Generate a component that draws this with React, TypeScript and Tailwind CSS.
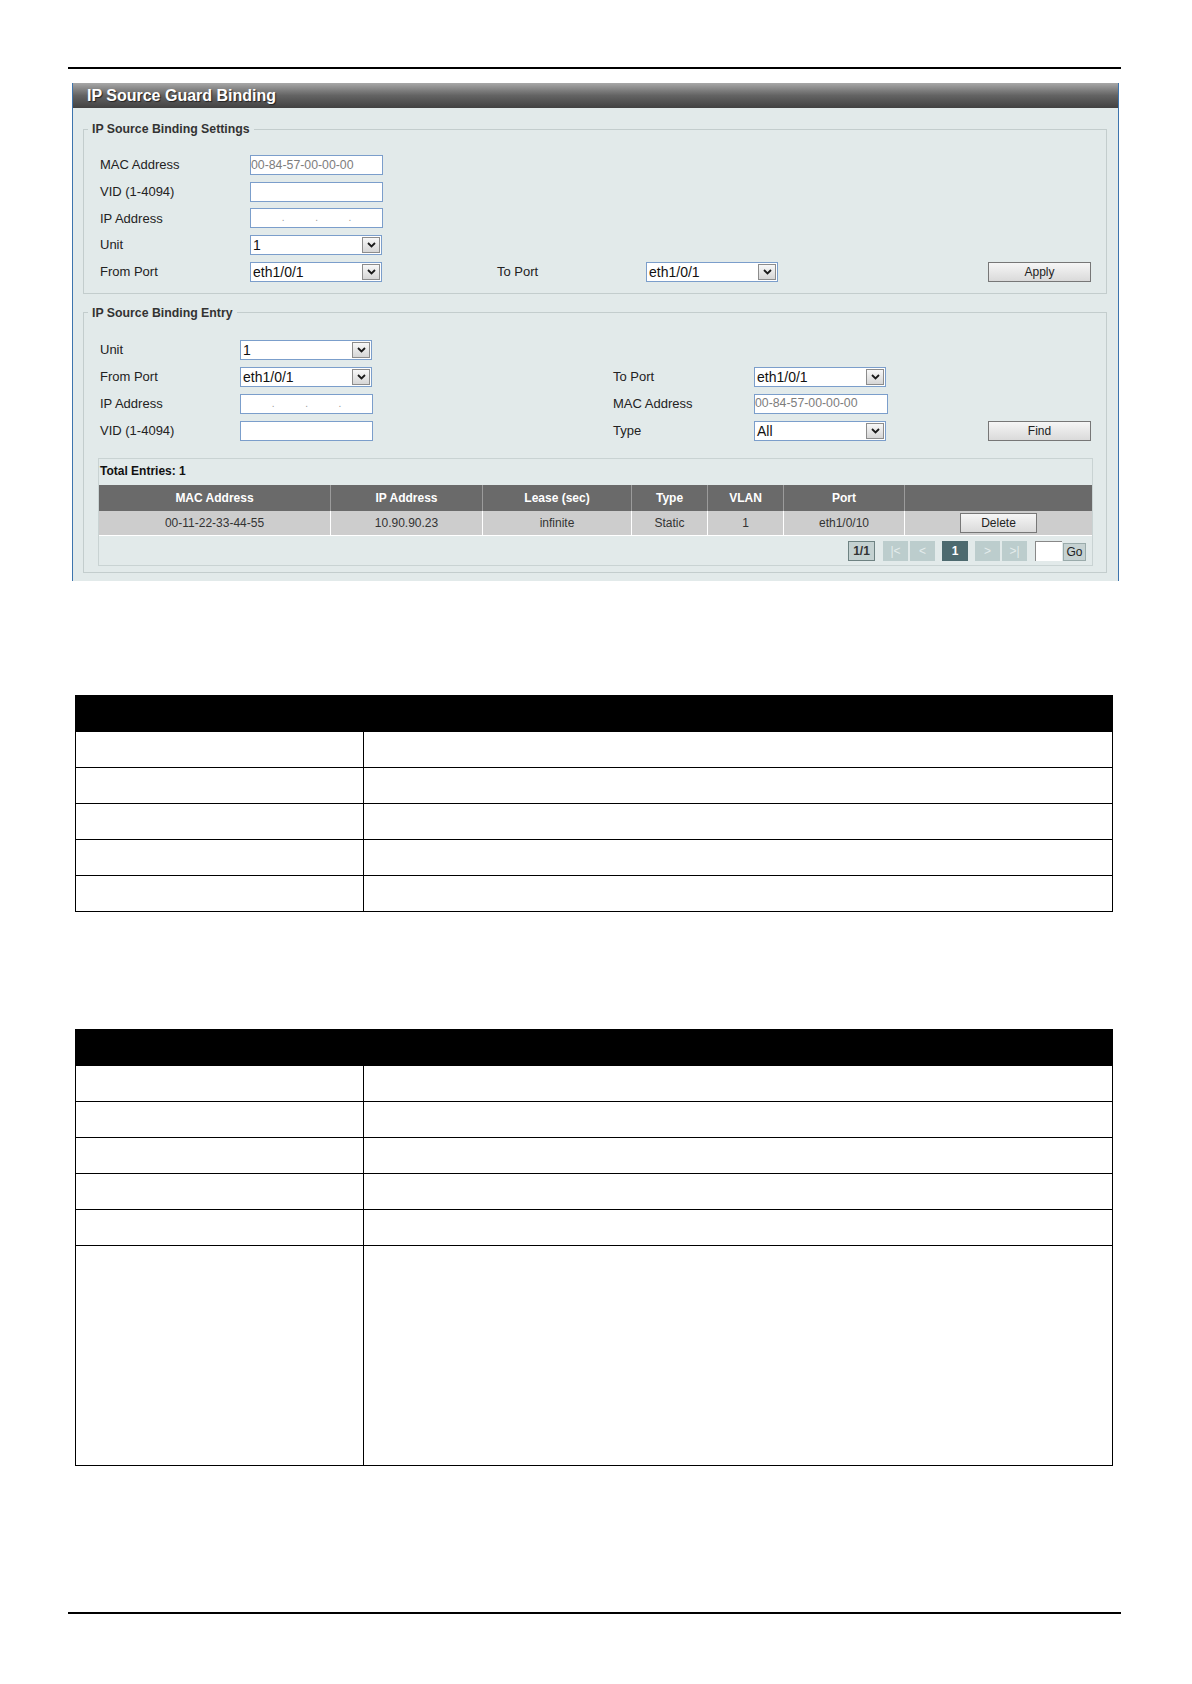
import React from "react";

// Small dropdown arrow button used by every select box
const ArrowBox = () => (
  <span className="flex h-[16px] w-[18px] shrink-0 items-center justify-center border border-[#8c8c8c] bg-linear-to-b from-[#f8f8f8] to-[#d6d6d6]">
    <svg width="9" height="6" viewBox="0 0 9 6">
      <path d="M1 1l3.5 3.5L8 1" fill="none" stroke="#1a1a1a" strokeWidth="1.8" />
    </svg>
  </span>
);

function Select({ value, width }: { value: string; width: string }) {
  return (
    <div
      className={`flex h-[20px] shrink-0 items-center justify-between border border-[#7b9ecb] bg-white pl-[2px] pr-[1px] text-[14px] leading-none text-[#111] ${width}`}
    >
      <span>{value}</span>
      <ArrowBox />
    </div>
  );
}

function TextInput({ value = "", width }: { value?: string; width: string }) {
  return (
    <div
      className={`flex h-[20px] shrink-0 items-center border border-[#7b9ecb] bg-white text-[12.3px] leading-none text-[#7d7d7d] ${width}`}
    >
      {value}
    </div>
  );
}

// IPv4 field: four empty octets separated by dots
function IpInput({ width }: { width: string }) {
  return (
    <div
      className={`flex h-[20px] shrink-0 items-center border border-[#7b9ecb] bg-white text-[10px] leading-none text-[#9a9a9a] ${width}`}
    >
      <span className="flex-1" />
      <span>.</span>
      <span className="flex-1" />
      <span>.</span>
      <span className="flex-1" />
      <span>.</span>
      <span className="flex-1" />
    </div>
  );
}

function Button({ label, width }: { label: string; width: string }) {
  return (
    <div
      className={`flex h-[20px] shrink-0 items-center justify-center border border-[#777] bg-linear-to-b from-[#f6f6f6] to-[#dadada] text-[12px] text-[#222] ${width}`}
    >
      {label}
    </div>
  );
}

function Label({ text, width }: { text: string; width: string }) {
  return <span className={`shrink-0 text-[13px] text-[#222] ${width}`}>{text}</span>;
}

function Legend({ text }: { text: string }) {
  return (
    <legend className="ml-[4px] px-[4px] text-[12.3px] font-bold leading-[14px] text-[#333]">
      {text}
    </legend>
  );
}

const columns = ["MAC Address", "IP Address", "Lease (sec)", "Type", "VLAN", "Port", ""];
const entry = ["00-11-22-33-44-55", "10.90.90.23", "infinite", "Static", "1", "eth1/0/10"];

function PagerBox({
  children,
  className,
}: {
  children?: React.ReactNode;
  className: string;
}) {
  return (
    <div className={`flex h-[20px] shrink-0 items-center justify-center text-[12px] ${className}`}>
      {children}
    </div>
  );
}

function BlankTable({ rows }: { rows: string[] }) {
  return (
    <div className="ml-[75px] w-[1038px] border-x border-black">
      <div className="h-[37px] bg-black" />
      {rows.map((h, i) => (
        <div key={i} className={`flex border-b border-black ${h}`}>
          <div className="w-[288px] border-r border-black" />
          <div className="flex-1" />
        </div>
      ))}
    </div>
  );
}

export default function App() {
  return (
    <div className="relative h-[1684px] w-[1192px] overflow-hidden bg-white pt-[67px] font-['Liberation_Sans',Arial,sans-serif]">
      <div className="ml-[68px] h-[2px] w-[1053px] bg-black" />

      {/* Settings panel */}
      <div className="ml-[72px] mt-[14px] h-[498px] w-[1047px] border-x border-[#3d74ad] bg-[#e2eaea]">
        <div className="flex h-[25px] items-center bg-linear-to-b from-[#a8a8a8] via-[#636363] to-[#424242] pl-[14px] text-[16px] font-bold text-white [text-shadow:1px_1px_1px_#222]">
          IP Source Guard Binding
        </div>

        <fieldset className="ml-[10px] mr-[11px] mt-[14px] border border-[#c3cdcd]">
          <Legend text="IP Source Binding Settings" />
          <div className="flex flex-col gap-[6.67px] pb-[11px] pl-[16px] pr-[15px] pt-[19px]">
            <div className="flex h-[20px] items-center">
              <Label text="MAC Address" width="w-[150px]" />
              <TextInput value="00-84-57-00-00-00" width="w-[133px]" />
            </div>
            <div className="flex h-[20px] items-center">
              <Label text="VID (1-4094)" width="w-[150px]" />
              <TextInput width="w-[133px]" />
            </div>
            <div className="flex h-[20px] items-center">
              <Label text="IP Address" width="w-[150px]" />
              <IpInput width="w-[133px]" />
            </div>
            <div className="flex h-[20px] items-center">
              <Label text="Unit" width="w-[150px]" />
              <Select value="1" width="w-[132px]" />
            </div>
            <div className="flex h-[20px] items-center">
              <Label text="From Port" width="w-[150px]" />
              <Select value="eth1/0/1" width="w-[132px]" />
              <span className="w-[115px] shrink-0" />
              <Label text="To Port" width="w-[149px]" />
              <Select value="eth1/0/1" width="w-[132px]" />
              <div className="ml-auto">
                <Button label="Apply" width="w-[103px]" />
              </div>
            </div>
          </div>
        </fieldset>

        <fieldset className="ml-[10px] mr-[11px] mt-[12px] border border-[#c3cdcd] pb-[6px]">
          <Legend text="IP Source Binding Entry" />
          <div className="flex flex-col gap-[7px] pl-[16px] pr-[15px] pt-[20px]">
            <div className="flex h-[20px] items-center">
              <Label text="Unit" width="w-[140px]" />
              <Select value="1" width="w-[132px]" />
            </div>
            <div className="flex h-[20px] items-center">
              <Label text="From Port" width="w-[140px]" />
              <Select value="eth1/0/1" width="w-[132px]" />
              <span className="w-[241px] shrink-0" />
              <Label text="To Port" width="w-[141px]" />
              <Select value="eth1/0/1" width="w-[132px]" />
            </div>
            <div className="flex h-[20px] items-center">
              <Label text="IP Address" width="w-[140px]" />
              <IpInput width="w-[133px]" />
              <span className="w-[240px] shrink-0" />
              <Label text="MAC Address" width="w-[141px]" />
              <TextInput value="00-84-57-00-00-00" width="w-[134px]" />
            </div>
            <div className="flex h-[20px] items-center">
              <Label text="VID (1-4094)" width="w-[140px]" />
              <TextInput width="w-[133px]" />
              <span className="w-[240px] shrink-0" />
              <Label text="Type" width="w-[141px]" />
              <Select value="All" width="w-[132px]" />
              <div className="ml-auto">
                <Button label="Find" width="w-[103px]" />
              </div>
            </div>
          </div>

          {/* Result list */}
          <div className="ml-[14px] mr-[13px] mt-[17px] border border-[#c9d3d3]">
            <div className="flex h-[26px] items-center pb-[2px] pl-[1px] text-[12px] font-bold text-[#111]">
              Total Entries: 1
            </div>
            <div className="grid h-[26px] grid-cols-[232px_152px_149px_76px_76px_121px_187px] bg-[#6a6a6a] text-[12px] font-bold text-white">
              {columns.map((c, i) => (
                <div
                  key={i}
                  className={`flex items-center justify-center ${i < columns.length - 1 ? "border-r border-[#9b9b9b]" : ""}`}
                >
                  {c}
                </div>
              ))}
            </div>
            <div className="grid h-[25px] grid-cols-[232px_152px_149px_76px_76px_121px_187px] border-b border-white bg-[#cdcdcd] text-[12px] text-[#333]">
              {entry.map((c, i) => (
                <div key={i} className="flex items-center justify-center border-r border-white">
                  {c}
                </div>
              ))}
              <div className="flex items-center justify-center">
                <Button label="Delete" width="w-[77px]" />
              </div>
            </div>
            <div className="flex h-[29px] items-start justify-end pr-[6px] pt-[5px]">
              <PagerBox className="w-[27px] border border-[#6e8282] bg-[#c4d1d1] font-bold text-[#333]">
                1/1
              </PagerBox>
              <PagerBox className="ml-[8px] w-[25px] bg-[#bccdcd] text-[#e4ecec]">|&lt;</PagerBox>
              <PagerBox className="ml-[2px] w-[25px] bg-[#bccdcd] text-[#e4ecec]">&lt;</PagerBox>
              <PagerBox className="ml-[7px] w-[26px] bg-[#4d6a6f] font-bold text-white">1</PagerBox>
              <PagerBox className="ml-[7px] w-[25px] bg-[#bccdcd] text-[#e4ecec]">&gt;</PagerBox>
              <PagerBox className="ml-[2px] w-[25px] bg-[#bccdcd] text-[#e4ecec]">&gt;|</PagerBox>
              <PagerBox className="ml-[8px] w-[27px] border-l border-t border-[#888] bg-white" />
              <div className="ml-[1px] mt-[2px] flex h-[18px] w-[23px] items-center justify-center border border-[#9aabab] bg-[#c6d2d2] text-[12px] text-[#222]">
                Go
              </div>
            </div>
          </div>
        </fieldset>
      </div>

      {/* Parameter description tables */}
      <div className="mt-[114px]">
        <BlankTable rows={["h-[36px]", "h-[36px]", "h-[36px]", "h-[36px]", "h-[36px]"]} />
      </div>
      <div className="mt-[117px]">
        <BlankTable
          rows={["h-[36px]", "h-[36px]", "h-[36px]", "h-[36px]", "h-[36px]", "h-[220px]"]}
        />
      </div>

      <div className="ml-[68px] mt-[146px] h-[2px] w-[1053px] bg-black" />
    </div>
  );
}
